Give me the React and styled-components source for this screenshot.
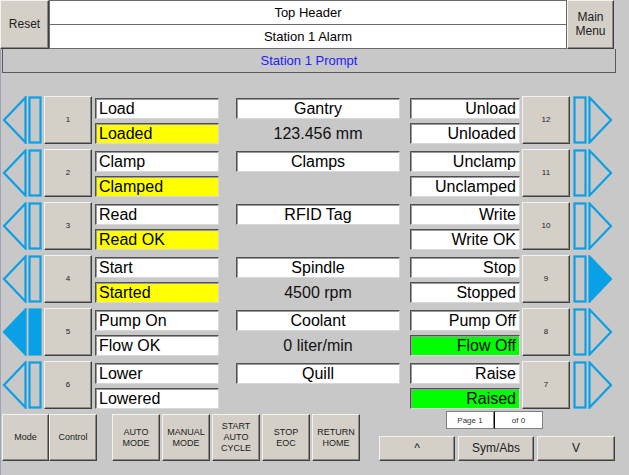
import React from "react";
import styled, { createGlobalStyle } from "styled-components";

const Global = createGlobalStyle`
  body { margin: 0; background: #c8c8c8; }
  * { box-sizing: border-box; }
`;

const Screen = styled.div`
  width: 629px;
  height: 475px;
  background: #c8c8c8;
  box-shadow: inset 1px 0 0 #9aa6bc;
  font-family: "Liberation Sans", Arial, sans-serif;
  color: #000;
  overflow: hidden;
  position: relative;
`;

const Header = styled.div`
  display: flex;
  height: 49px;
`;

const RaisedButton = styled.div`
  display: flex;
  align-items: center;
  justify-content: center;
  text-align: center;
  background: #d4d0c8;
  border: 1px solid;
  border-color: #f4f2ee #404040 #404040 #f4f2ee;
  box-shadow: inset -1px -1px 0 #8a8884;
  font-size: ${(p) => p.$fs || 9}px;
  line-height: ${(p) => p.$lh || 1.2};
  width: ${(p) => p.$w}px;
  height: ${(p) => p.$h}px;
  margin-left: ${(p) => p.$ml || 0}px;
  color: #202020;
  flex-shrink: 0;
`;

const TitleStack = styled.div`
  width: 518px;
  display: flex;
  flex-direction: column;
`;

const TitleCell = styled.div`
  flex: 1;
  background: #fff;
  border: 1px solid #6a6a6a;
  border-top-width: ${(p) => (p.$first ? 1 : 0)}px;
  display: flex;
  align-items: center;
  justify-content: center;
  font-size: 13px;
`;

const Prompt = styled.div`
  margin-left: 2px;
  width: 614px;
  height: 24px;
  border: 1px solid #5a5a5a;
  border-top: none;
  display: flex;
  align-items: center;
  justify-content: center;
  font-size: 13px;
  color: #2020ff;
`;

const Stations = styled.div`
  margin-top: 23px;
  display: flex;
  flex-direction: column;
  gap: 5px;
`;

const Row = styled.div`
  display: flex;
  height: 48px;
`;

const Arrow = styled.svg`
  width: 44px;
  height: 48px;
  flex-shrink: 0;
`;

const FieldCol = styled.div`
  display: flex;
  flex-direction: column;
  gap: 4px;
  padding-top: 2px;
  width: ${(p) => p.$w}px;
  margin-left: ${(p) => p.$ml}px;
`;

const Field = styled.div`
  height: 21px;
  background: ${(p) => p.$bg || "#fff"};
  border: 1px solid;
  border-color: #505050 #d8d8d8 #d8d8d8 #505050;
  box-shadow: inset 1px 1px 0 #9a9a9a;
  font-size: 16px;
  line-height: 19px;
  padding: 0 3px;
  text-align: ${(p) => p.$align || "left"};
  white-space: nowrap;
`;

const Value = styled.div`
  height: 21px;
  font-size: 16px;
  line-height: 21px;
  text-align: center;
  color: #111;
`;

const Bottom = styled.div`
  display: flex;
  margin-top: 2px;
`;

const ModeGroup = styled.div`
  display: flex;
  margin-top: 3px;
  margin-left: 2px;
  align-items: flex-start;
`;

const NavArea = styled.div`
  margin-left: 19px;
  display: flex;
  flex-direction: column;
`;

const PageBox = styled.div`
  display: flex;
  margin-left: 67px;
  height: 18px;
`;

const PageCell = styled.div`
  width: ${(p) => p.$w}px;
  background: #fff;
  border: 1px solid #808080;
  border-left: ${(p) => (p.$split ? "1px solid #000" : "1px solid #808080")};
  font-size: 8px;
  display: flex;
  align-items: center;
  justify-content: center;
  color: #333;
`;

const NavRow = styled.div`
  display: flex;
  margin-top: 7px;
`;

const BLUE = "#0aa0e6";

function LeftArrow({ filled }) {
  return (
    <Arrow viewBox="0 0 44 48">
      <polygon points="4,24 25.5,1.5 25.5,46.5" fill={filled ? BLUE : "none"} stroke={BLUE} strokeWidth="2.2" />
      <rect x="29.5" y="1.5" width="11" height="45" fill={filled ? BLUE : "none"} stroke={BLUE} strokeWidth="2.2" />
    </Arrow>
  );
}

function RightArrow({ filled }) {
  return (
    <Arrow viewBox="0 0 44 48">
      <rect x="4.5" y="1.5" width="11" height="45" fill="none" stroke={BLUE} strokeWidth="2.2" />
      <polygon points="19.5,1.5 19.5,46.5 41,24" fill={filled ? BLUE : "none"} stroke={BLUE} strokeWidth="2.2" />
    </Arrow>
  );
}

const stations = [
  { l: 1, r: 12, a: "Load", b: "Loaded", bY: true, c: "Gantry", v: "123.456 mm", x: "Unload", y: "Unloaded" },
  { l: 2, r: 11, a: "Clamp", b: "Clamped", bY: true, c: "Clamps", v: "", x: "Unclamp", y: "Unclamped" },
  { l: 3, r: 10, a: "Read", b: "Read OK", bY: true, c: "RFID Tag", v: "", x: "Write", y: "Write OK" },
  { l: 4, r: 9, a: "Start", b: "Started", bY: true, c: "Spindle", v: "4500 rpm", x: "Stop", y: "Stopped", rf: true },
  { l: 5, r: 8, a: "Pump On", b: "Flow OK", c: "Coolant", v: "0 liter/min", x: "Pump Off", y: "Flow Off", yG: true, lf: true },
  { l: 6, r: 7, a: "Lower", b: "Lowered", c: "Quill", v: "", x: "Raise", y: "Raised", yG: true },
];

const modes = [
  ["AUTO", "MODE"],
  ["MANUAL", "MODE"],
  ["START", "AUTO", "CYCLE"],
  ["STOP", "EOC"],
  ["RETURN", "HOME"],
];

export default function App() {
  return (
    <Screen>
      <Global />
      <Header>
        <RaisedButton $w={49} $h={49} $fs={12}>Reset</RaisedButton>
        <TitleStack>
          <TitleCell $first>Top Header</TitleCell>
          <TitleCell>Station 1 Alarm</TitleCell>
        </TitleStack>
        <RaisedButton $w={47} $h={49} $fs={12} $lh={1.15}>Main<br />Menu</RaisedButton>
      </Header>
      <Prompt>Station 1 Prompt</Prompt>

      <Stations>
        {stations.map((s) => (
          <Row key={s.l}>
            <LeftArrow filled={s.lf} />
            <RaisedButton $w={48} $h={48} $fs={8}>{s.l}</RaisedButton>
            <FieldCol $w={124} $ml={3}>
              <Field>{s.a}</Field>
              <Field $bg={s.bY ? "#ffff00" : "#fff"}>{s.b}</Field>
            </FieldCol>
            <FieldCol $w={164} $ml={17}>
              <Field $align="center">{s.c}</Field>
              <Value>{s.v}</Value>
            </FieldCol>
            <FieldCol $w={110} $ml={10}>
              <Field $align="right">{s.x}</Field>
              <Field $align="right" $bg={s.yG ? "#00ff00" : "#fff"}>{s.y}</Field>
            </FieldCol>
            <RaisedButton $w={48} $h={48} $ml={2} $fs={8}>{s.r}</RaisedButton>
            <RightArrow filled={s.rf} />
          </Row>
        ))}
      </Stations>

      <Bottom>
        <ModeGroup>
          <RaisedButton $w={47} $h={47}>Mode</RaisedButton>
          <RaisedButton $w={48} $h={47}>Control</RaisedButton>
          {modes.map((m, i) => (
            <RaisedButton key={i} $w={48} $h={47} $ml={i === 0 ? 15 : 2}>
              {m.map((t, j) => (
                <React.Fragment key={j}>
                  {j > 0 && <br />}
                  {t}
                </React.Fragment>
              ))}
            </RaisedButton>
          ))}
        </ModeGroup>
        <NavArea>
          <PageBox>
            <PageCell $w={48}>Page 1</PageCell>
            <PageCell $w={49} $split>of 0</PageCell>
          </PageBox>
          <NavRow>
            <RaisedButton $w={76} $h={25} $fs={12}>^</RaisedButton>
            <RaisedButton $w={76} $h={25} $fs={12} $ml={3}>Sym/Abs</RaisedButton>
            <RaisedButton $w={78} $h={25} $fs={12} $ml={3}>V</RaisedButton>
          </NavRow>
        </NavArea>
      </Bottom>
    </Screen>
  );
}
